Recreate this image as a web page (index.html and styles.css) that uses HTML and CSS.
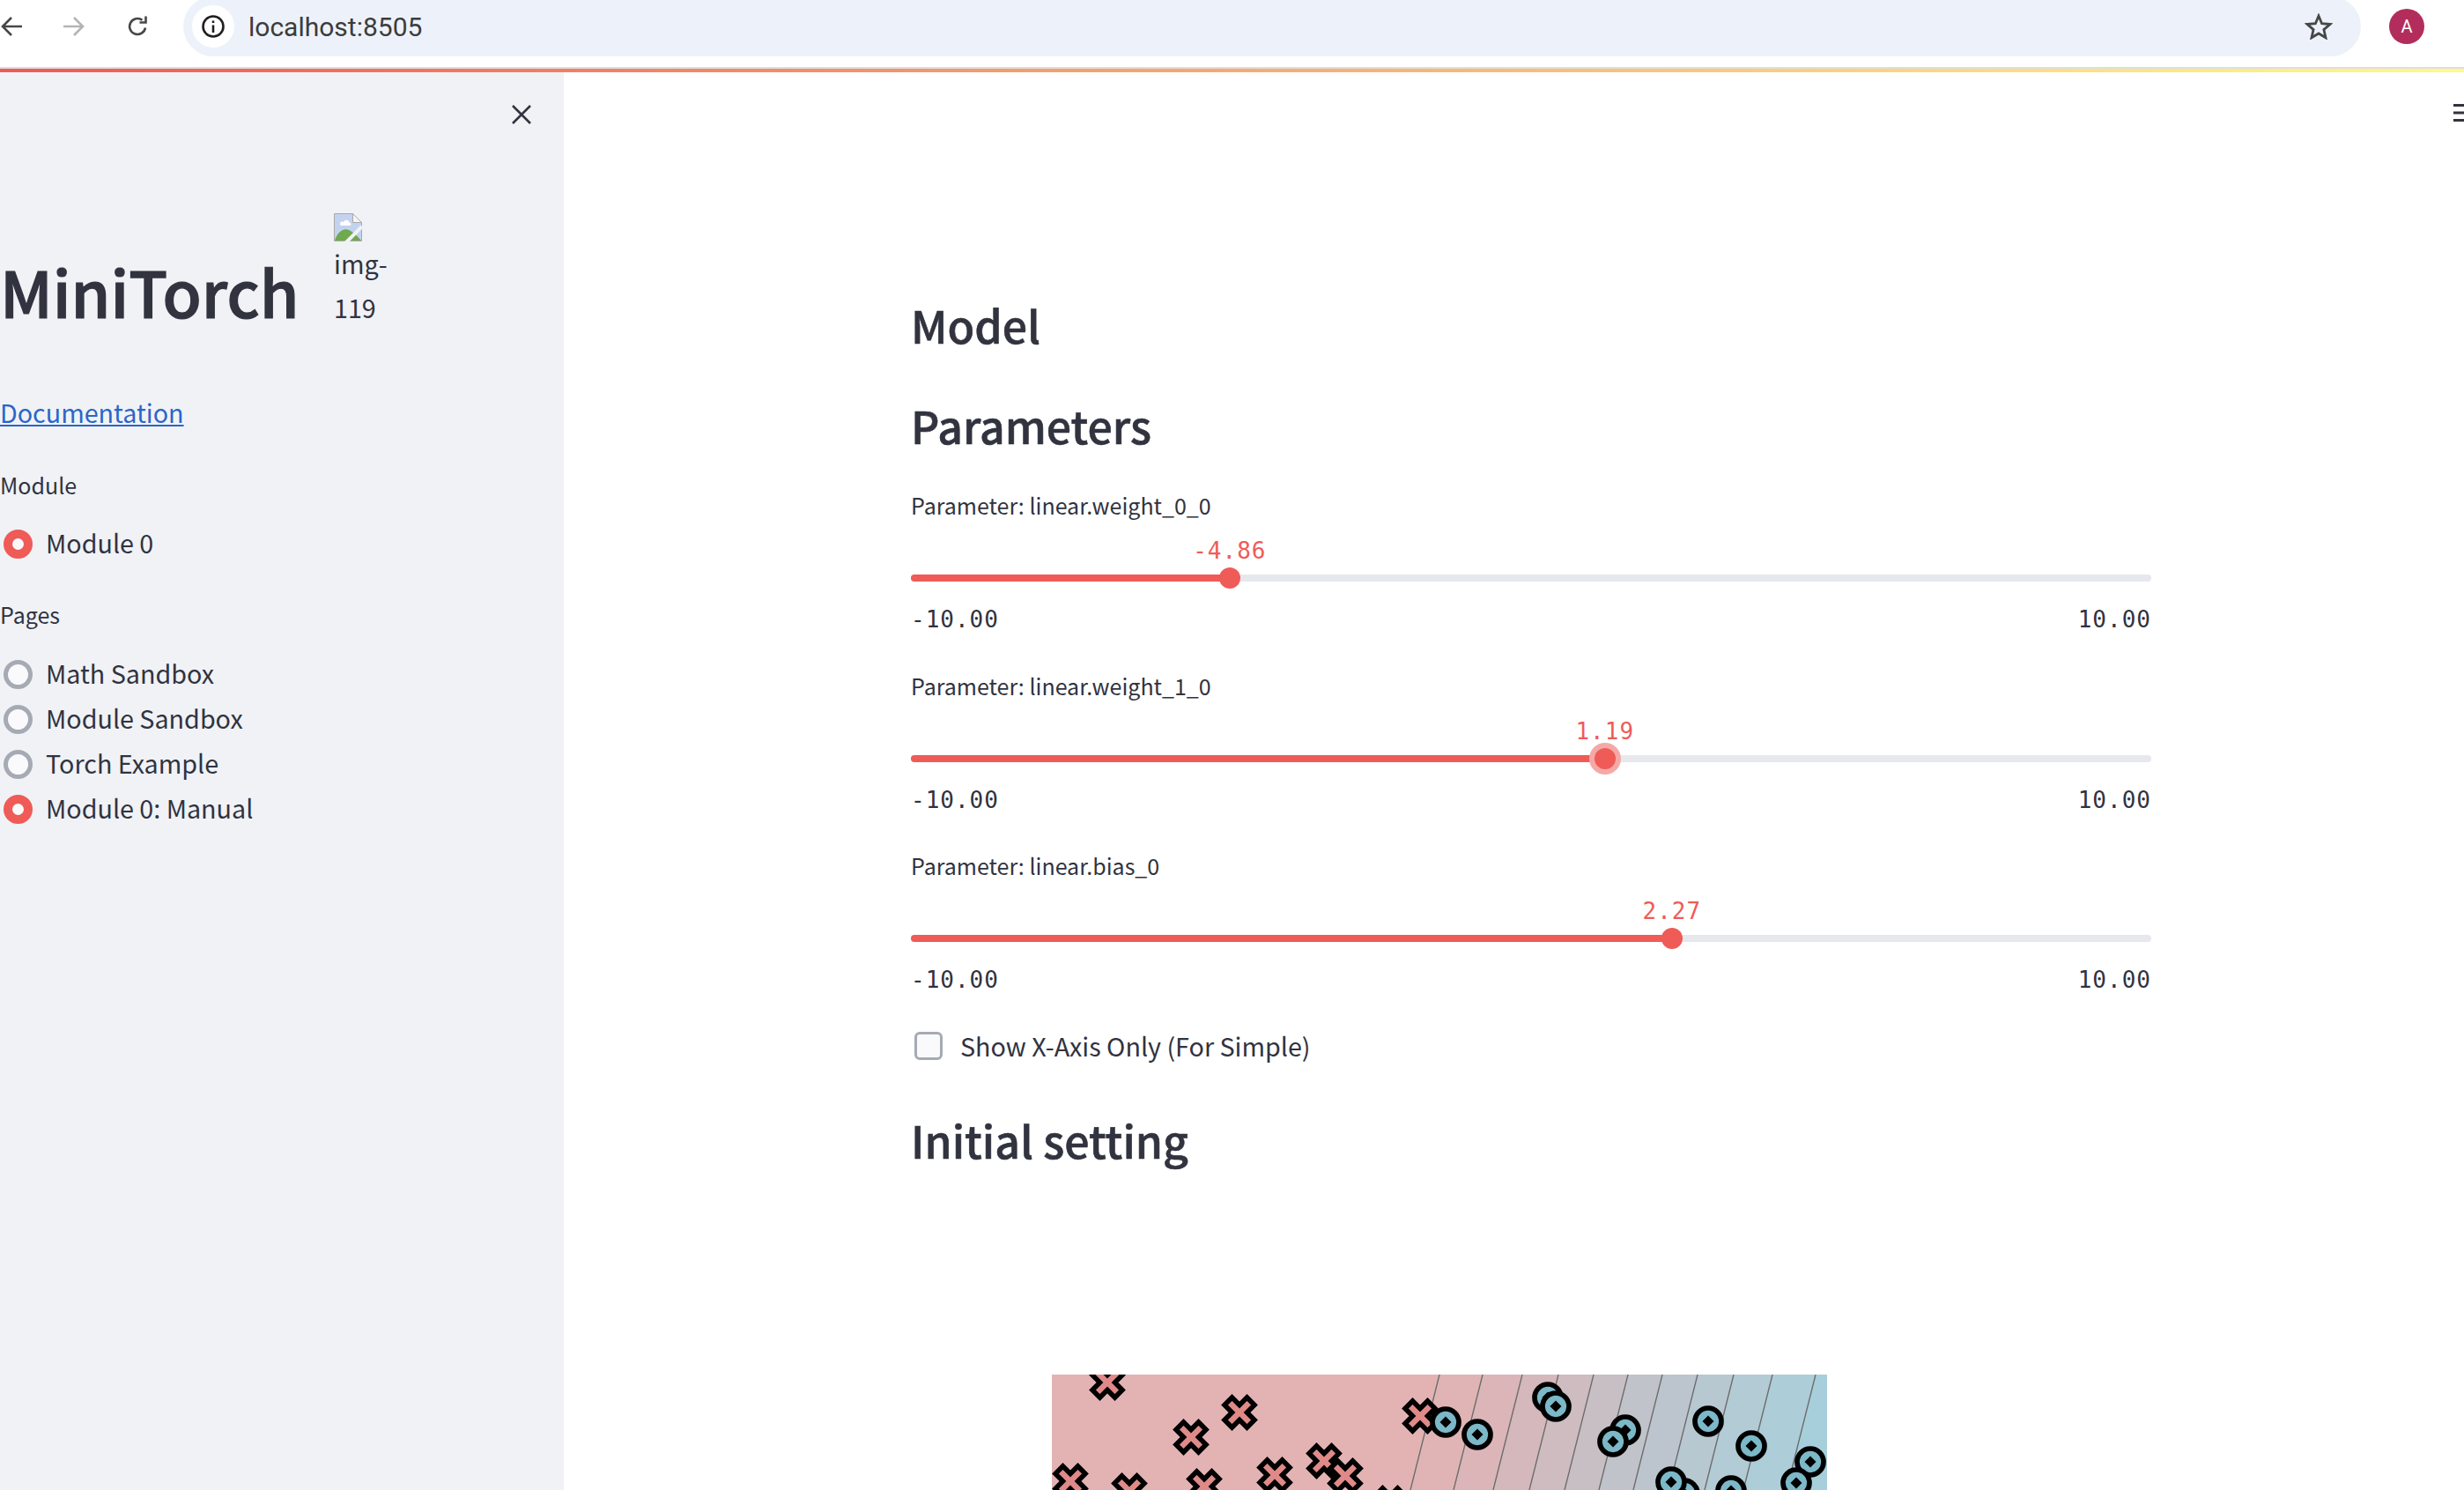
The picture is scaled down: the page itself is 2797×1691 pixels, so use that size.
FILE: index.html
```html
<!DOCTYPE html>
<html lang="en">
<head>
  <meta charset="UTF-8">
  <meta name="viewport" content="width=device-width, initial-scale=1.0">
  <title>MiniTorch</title>
  <link rel="stylesheet" href="styles.css">
</head>
<body>
  <div class="browser-bar">
    <div class="nav-buttons">
      <svg class="nav-icon" viewBox="0 0 25 24"><path d="M25 12H3M13 2 3 12l10 10"/></svg>
      <svg class="nav-icon nav-off" viewBox="0 0 25 24"><path d="M0 12h22M12 2l10 10-10 10"/></svg>
      <svg class="nav-icon" viewBox="0 0 25 24"><path d="M21 13.500A9 9 0 1 1 17.500 4.800M21.500 0.500V7.500H14.500"/></svg>
    </div>
    <div class="url-bar">
      <span class="site-info">
        <svg viewBox="0 0 26 26" class="info-icon"><circle cx="13" cy="13" r="11.500"/><path d="M13 11.500V20M13 6.500V9"/></svg>
      </span>
      <span class="url-text">localhost:8505</span>
      <svg class="star" viewBox="0 0 32 30"><path d="M16 3l3.600 8.700 9.400.8-7.100 6.100 2.100 9.200L16 23l-8 4.800 2.100-9.200L3 12.500l9.400-.8z"/></svg>
    </div>
    <span class="avatar">A</span>
  </div>
  <div class="decoration"></div>

  <div class="app">
    <aside class="sidebar">
      <div class="close-row">
        <svg class="close-icon" viewBox="0 0 24 24"><path d="M2 2l20 20M22 2 2 22"/></svg>
      </div>
      <div class="title-row">
        <h1>MiniTorch</h1>
        <div class="broken-img">
          <svg class="broken-icon" viewBox="0 0 32 32">
            <path class="bi-page" d="M.5.500h21l10 10v21H.5z"/>
            <path class="bi-hill" d="M1 31c3-10 10-15 16-12 5 2 9 6 14 12z"/>
            <path class="bi-cloud" d="M7 12c0-3 3-3 4-2 1-3 6-3 7 1 2 0 2 3 0 3H8c-1 0-1-2-1-2z"/>
            <path class="bi-cut" d="M13 34 32 15"/>
            <path class="bi-fold" d="M21.500.500v10h10z"/>
          </svg>
          <div>img-119</div>
        </div>
      </div>
      <a class="doc-link" href="#">Documentation</a>
      <div class="side-label">Module</div>
      <div class="radio-row radio-on"><span class="radio"></span>Module 0</div>
      <div class="side-label pages-label">Pages</div>
      <div class="radio-list">
        <div class="radio-row"><span class="radio"></span>Math Sandbox</div>
        <div class="radio-row"><span class="radio"></span>Module Sandbox</div>
        <div class="radio-row"><span class="radio"></span>Torch Example</div>
        <div class="radio-row radio-on"><span class="radio"></span>Module 0: Manual</div>
      </div>
    </aside>

    <main class="content">
      <svg class="menu-icon" viewBox="0 0 12 20"><path d="M0 1.500h12M0 10h12M0 18.500h12"/></svg>
      <h3 class="model-title">Model</h3>
      <h3 class="params-title">Parameters</h3>

      <div class="sliders">
        <div class="slider">
          <div class="slider-label">Parameter: linear.weight_0_0</div>
          <div class="track">
            <div class="track-fill" style="width: 25.7%"></div>
            <div class="thumb" style="left: 25.7%"><span class="thumb-value">-4.86</span></div>
          </div>
          <div class="slider-range"><span>-10.00</span><span>10.00</span></div>
        </div>
        <div class="slider">
          <div class="slider-label">Parameter: linear.weight_1_0</div>
          <div class="track">
            <div class="track-fill" style="width: 55.95%"></div>
            <div class="thumb thumb-active" style="left: 55.95%"><span class="thumb-value">1.19</span></div>
          </div>
          <div class="slider-range"><span>-10.00</span><span>10.00</span></div>
        </div>
        <div class="slider">
          <div class="slider-label">Parameter: linear.bias_0</div>
          <div class="track">
            <div class="track-fill" style="width: 61.35%"></div>
            <div class="thumb" style="left: 61.35%"><span class="thumb-value">2.27</span></div>
          </div>
          <div class="slider-range"><span>-10.00</span><span>10.00</span></div>
        </div>
      </div>

      <div class="check-row"><span class="checkbox"></span>Show X-Axis Only (For Simple)</div>
      <h3 class="setting-title">Initial setting</h3>

      <svg class="plot" viewBox="1194 1560 880 131" width="880" height="131">
        <rect x="1194" y="1560" width="880" height="131" fill="#e3b3b3"/>
        <g class="bands">
          <path fill="#e0b4b4" d="M1634 1560h49l-33 131h-49z"/>
          <path fill="#dbb5b8" d="M1683 1560h45l-33 131h-45z"/>
          <path fill="#d5b8bc" d="M1728 1560h41l-33 131h-41z"/>
          <path fill="#cebcc0" d="M1769 1560h40l-33 131h-40z"/>
          <path fill="#c8bfc5" d="M1809 1560h39l-33 131h-39z"/>
          <path fill="#c1c3ca" d="M1848 1560h39l-33 131h-39z"/>
          <path fill="#bcc5cd" d="M1887 1560h40l-33 131h-40z"/>
          <path fill="#b7c8d1" d="M1927 1560h41l-33 131h-41z"/>
          <path fill="#b2cbd4" d="M1968 1560h44l-33 131h-44z"/>
          <path fill="#adcdd8" d="M2012 1560h49l-33 131h-49z"/>
          <path fill="#a7cfdb" d="M2061 1560h13v131h-46z"/>
        </g>
        <g class="contours">
          <path d="M1634 1560l-33 131M1683 1560l-33 131M1728 1560l-33 131M1769 1560l-33 131M1809 1560l-33 131M1848 1560l-33 131M1887 1560l-33 131M1927 1560l-33 131M1968 1560l-33 131M2012 1560l-33 131M2061 1560l-33 131"/>
        </g>
        <defs>
          <path id="cross" d="M-8.500-17-0-8.500 8.500-17 17-8.500 8.500 0 17 8.500 8.500 17 0 8.500-8.500 17-17 8.500-8.500 0-17-8.500z"/>
          <g id="dot">
            <circle r="15"/>
            <path class="dot-core" d="M0-6.500 6.500 0 0 6.500-6.500 0z"/>
          </g>
        </defs>
        <g class="crosses">
          <use href="#cross" x="1257" y="1569"/>
          <use href="#cross" x="1407" y="1603"/>
          <use href="#cross" x="1352" y="1631"/>
          <use href="#cross" x="1612" y="1607"/>
          <use href="#cross" x="1503" y="1658"/>
          <use href="#cross" x="1527" y="1675"/>
          <use href="#cross" x="1447" y="1674"/>
          <use href="#cross" x="1215" y="1681"/>
          <use href="#cross" x="1282" y="1692"/>
          <use href="#cross" x="1367" y="1687"/>
          <use href="#cross" x="1578" y="1706"/>
        </g>
        <g class="dots">
          <use href="#dot" x="1641" y="1614"/>
          <use href="#dot" x="1677" y="1628"/>
          <use href="#dot" x="1757" y="1586"/>
          <use href="#dot" x="1766" y="1596"/>
          <use href="#dot" x="1845" y="1623"/>
          <use href="#dot" x="1831" y="1636"/>
          <use href="#dot" x="1939" y="1613"/>
          <use href="#dot" x="1988" y="1641"/>
          <use href="#dot" x="2055" y="1659"/>
          <use href="#dot" x="2039" y="1683"/>
          <use href="#dot" x="1912" y="1695"/>
          <use href="#dot" x="1897" y="1682"/>
          <use href="#dot" x="1965" y="1692"/>
        </g>
      </svg>
    </main>
  </div>
</body>
</html>
```

FILE: styles.css
```css
* {
  box-sizing: border-box;
}
html, body {
  margin: 0;
  height: 100%;
  overflow: hidden;
}
body {
  display: flex;
  flex-direction: column;
  background: #fff;
  color: #31333f;
  font-family: "Noto Sans CJK SC", "Noto Sans", sans-serif;
  font-size: 28.7px;
}

/* browser chrome */
.browser-bar {
  display: flex;
  align-items: flex-start;
  height: 78px;
  border-bottom: 2px solid #dedede;
  flex: none;
}
.nav-buttons {
  display: flex;
  gap: 47px;
  width: 208px;
  padding-top: 18px;
}
.nav-icon {
  width: 25px;
  height: 24px;
  fill: none;
  stroke: #474747;
  stroke-width: 2.6;
}
.nav-off {
  stroke: #b4b4b4;
}
.url-bar {
  display: flex;
  align-items: center;
  width: 2472px;
  height: 68px;
  margin-top: -4px;
  padding: 0 32px 0 10px;
  background: #edf2fa;
  border-radius: 34px;
}
.site-info {
  display: flex;
  align-items: center;
  justify-content: center;
  width: 48px;
  height: 48px;
  background: #fff;
  border-radius: 50%;
}
.info-icon {
  width: 26px;
  height: 26px;
  fill: none;
  stroke: #1f1f1f;
  stroke-width: 2.6;
}
.url-text {
  flex: 1;
  margin-left: 16px;
  font-family: Roboto, sans-serif;
  font-size: 30px;
  color: #3c3c3c;
}
.star {
  width: 32px;
  height: 30px;
  fill: none;
  stroke: #474747;
  stroke-width: 2.8;
}
.avatar {
  display: flex;
  align-items: center;
  justify-content: center;
  width: 40px;
  height: 40px;
  margin: 10px 0 0 32px;
  border-radius: 50%;
  background: #b22d5b;
  color: #fff;
  font-family: Roboto, sans-serif;
  font-size: 20px;
}
.decoration {
  flex: none;
  height: 4px;
  background: linear-gradient(90deg, #ef5a57, #fff98a);
}

/* app layout */
.app {
  position: relative;
  display: flex;
  flex: 1;
  min-height: 0;
}
.sidebar {
  flex: none;
  width: 640px;
  background: #f0f2f6;
}
.close-row {
  display: flex;
  justify-content: flex-end;
  align-items: center;
  height: 96px;
  padding-right: 36px;
}
.close-icon {
  width: 24px;
  height: 24px;
  fill: none;
  stroke: #31333f;
  stroke-width: 2.6;
}
.title-row {
  display: flex;
  align-items: last baseline;
  margin-top: 64px;
}
h1 {
  flex: none;
  width: 379px;
  margin: 0;
  font-size: 72px;
  font-weight: 500;
  -webkit-text-stroke: 1.200px #31333f;
  line-height: 100px;
}
.broken-img {
  width: 70px;
  line-height: 50px;
}
.broken-icon {
  display: block;
  width: 32px;
  height: 32px;
}
.bi-page {
  fill: #c3d3ef;
  stroke: #a9a9a9;
}
.bi-hill {
  fill: #70a94e;
}
.bi-cloud {
  fill: #fff;
}
.bi-cut {
  fill: none;
  stroke: #f0f2f6;
  stroke-width: 4;
}
.bi-fold {
  fill: #f5f5f5;
  stroke: #a9a9a9;
}
.doc-link {
  display: block;
  margin-top: 65px;
  color: #2a66c8;
  line-height: 46px;
}
.side-label {
  margin-top: 41px;
  font-size: 25px;
  line-height: 36px;
}
.pages-label {
  margin-top: 37.500px;
}
.radio-row {
  display: flex;
  align-items: center;
  height: 50.900px;
  line-height: 49px;
}
.side-label + .radio-row {
  margin-top: 22.500px;
}
.radio-list {
  margin-top: 23.500px;
}
.radio {
  flex: none;
  width: 33px;
  height: 33px;
  margin: 3px 15px 0 4px;
  background: #fafafc;
  border: 5px solid #a6aab3;
  border-radius: 50%;
}
.radio-on .radio {
  background: #fafafc;
  border: 10px solid #ef5b57;
}

/* main column */
.content {
  flex: 1;
  padding-left: 394px;
}
.menu-icon {
  position: absolute;
  top: 36px;
  right: 0;
  width: 12px;
  height: 20px;
  fill: none;
  stroke: #31333f;
  stroke-width: 3;
}
h3 {
  margin: 0;
  font-size: 50px;
  font-weight: 500;
  -webkit-text-stroke: .6px #31333f;
  line-height: 72px;
}
.model-title {
  margin-top: 250px;
}
.params-title {
  margin-top: 42px;
}
.sliders {
  display: flex;
  flex-direction: column;
  gap: 4.600px;
  width: 1408px;
  margin-top: 37px;
}
.slider {
  height: 200px;
}
.slider-label {
  font-size: 25px;
  line-height: 36px;
}
.track {
  position: relative;
  height: 8px;
  margin-top: 61px;
  background: #e6e8ee;
  border-radius: 4px;
}
.track-fill {
  height: 100%;
  background: #ef5b57;
  border-radius: 4px;
}
.thumb {
  position: absolute;
  top: -8px;
  width: 24px;
  height: 24px;
  margin-left: -12px;
  background: #ef5b57;
  border-radius: 50%;
}
.thumb-active {
  box-shadow: 0 0 0 6px #f5a9a6;
}
.thumb-value {
  position: absolute;
  bottom: 28px;
  left: 50%;
  transform: translateX(-50%);
  color: #ef5b57;
  font-family: "DejaVu Sans Mono", monospace;
  font-size: 26px;
  letter-spacing: 1px;
  line-height: 30px;
}
.slider-range {
  display: flex;
  justify-content: space-between;
  margin-top: 28px;
  font-family: "DejaVu Sans Mono", monospace;
  font-size: 26px;
  letter-spacing: 1px;
  line-height: 30px;
}
.check-row {
  display: flex;
  align-items: center;
  line-height: 46px;
}
.checkbox {
  flex: none;
  width: 32px;
  height: 32px;
  margin: 0 20px 0 4px;
  background: #fafafc;
  border: 3px solid #a6aab3;
  border-radius: 6px;
}
.setting-title {
  margin-top: 47px;
}
.plot {
  display: block;
  margin: 231px 0 0 160px;
}
.contours path {
  fill: none;
  stroke: #6d6d6d;
  stroke-width: 1.400;
}
.crosses use {
  fill: #df8a88;
  stroke: #000;
  stroke-width: 5.500;
}
.dots use {
  fill: #7bb8c8;
  stroke: #000;
  stroke-width: 5.700;
}
.dot-core {
  fill: #000;
  stroke: none;
}
```
